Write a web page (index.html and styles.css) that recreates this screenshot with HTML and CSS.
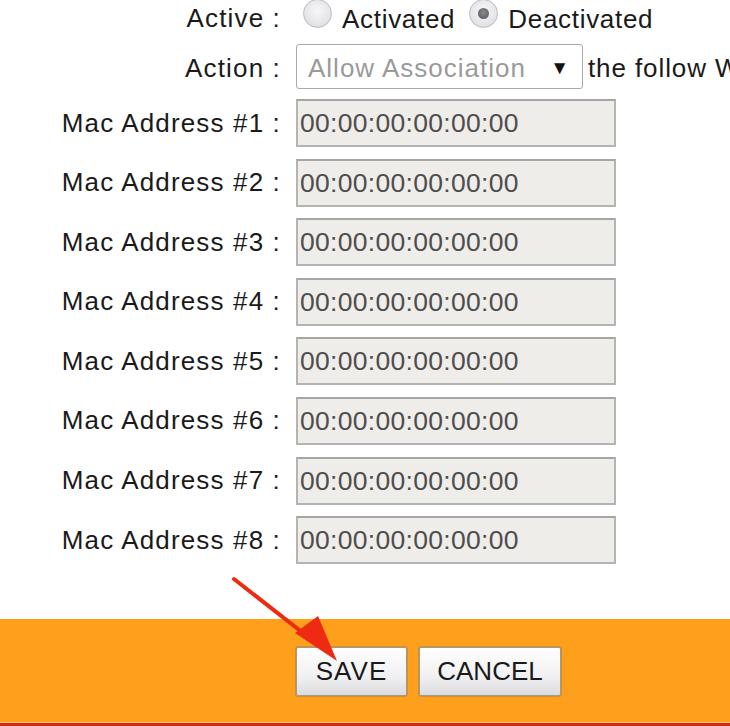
FILE: index.html
```html
<!DOCTYPE html>
<html>
<head>
<meta charset="utf-8">
<link rel="stylesheet" href="styles.css">
</head>
<body>
<div class="page">
  <div class="form">
    <div class="row row-active">
      <div class="label">Active :</div>
      <div class="field radios">
        <span class="radio"></span><span class="rtext">Activated</span>
        <span class="radio checked"></span><span class="rtext">Deactivated</span>
      </div>
    </div>
    <div class="row row-action">
      <div class="label">Action :</div>
      <div class="field">
        <div class="select"><span class="seltext">Allow Association</span><span class="caret">&#9660;</span></div>
        <span class="after">the follow Wireless LAN station(s)</span>
      </div>
    </div>
    <div class="row mac"><div class="label">Mac Address #1 :</div><div class="field"><div class="input">00:00:00:00:00:00</div></div></div>
    <div class="row mac"><div class="label">Mac Address #2 :</div><div class="field"><div class="input">00:00:00:00:00:00</div></div></div>
    <div class="row mac"><div class="label">Mac Address #3 :</div><div class="field"><div class="input">00:00:00:00:00:00</div></div></div>
    <div class="row mac"><div class="label">Mac Address #4 :</div><div class="field"><div class="input">00:00:00:00:00:00</div></div></div>
    <div class="row mac"><div class="label">Mac Address #5 :</div><div class="field"><div class="input">00:00:00:00:00:00</div></div></div>
    <div class="row mac"><div class="label">Mac Address #6 :</div><div class="field"><div class="input">00:00:00:00:00:00</div></div></div>
    <div class="row mac"><div class="label">Mac Address #7 :</div><div class="field"><div class="input">00:00:00:00:00:00</div></div></div>
    <div class="row mac"><div class="label">Mac Address #8 :</div><div class="field"><div class="input">00:00:00:00:00:00</div></div></div>
  </div>
  <div class="footer">
    <div class="spacer"></div>
    <div class="buttons">
      <button class="btn btn-save">SAVE</button>
      <button class="btn btn-cancel">CANCEL</button>
    </div>
  </div>
  <div class="redline"></div>
  <svg class="arrow" width="730" height="726" viewBox="0 0 730 726">
    <line x1="234" y1="579" x2="312" y2="640" stroke="#EE2A12" stroke-width="4" stroke-linecap="round"/>
    <polygon points="337,661 295,633 318,616" fill="#EE2A12"/>
  </svg>
</div>
</body>
</html>
```
FILE: styles.css
```css
html, body {
  margin: 0;
  padding: 0;
  background: #ffffff;
}
body {
  font-family: "Liberation Sans", Arial, sans-serif;
  color: #1a1a1a;
  width: 730px;
  height: 726px;
  overflow: hidden;
}
.page {
  position: relative;
  width: 730px;
  height: 726px;
  overflow: hidden;
  display: flex;
  flex-direction: column;
}
.form {
  display: flex;
  flex-direction: column;
}
.row {
  display: grid;
  grid-template-columns: 280px 1fr;
  column-gap: 16px;
  align-items: center;
}
.label {
  text-align: right;
  font-size: 26px;
  white-space: nowrap;
  letter-spacing: 1.15px;
  margin-right: -1px;
}
.field {
  display: flex;
  align-items: center;
  white-space: nowrap;
}
.row-active {
  height: 32px;
}
.row-active .label {
  padding-top: 1px;
}
.radios {
  padding-left: 7px;
  align-items: flex-start;
}
.radio {
  width: 29px;
  height: 29px;
  border-radius: 50%;
  border: 1px solid #bcbcc0;
  background: radial-gradient(circle at 50% 40%, #f7f7f9 0%, #e4e4e8 65%, #cfcfd3 100%);
  box-sizing: border-box;
  margin-top: -1px;
  position: relative;
  flex: none;
}
.radio.checked::after {
  content: "";
  position: absolute;
  left: 8px;
  top: 8px;
  width: 11px;
  height: 11px;
  border-radius: 50%;
  background: radial-gradient(circle at 50% 40%, #8a8a8e, #555559);
}
.rtext {
  font-size: 26px;
  letter-spacing: 0.7px;
  margin-left: 10px;
  margin-right: 14px;
  margin-top: 4px;
}
.row-action {
  margin-top: 12px;
  height: 45px;
}
.row-action .label {
  padding-top: 3px;
}
.select {
  width: 287px;
  height: 45px;
  box-sizing: border-box;
  border: 1px solid #a9a9a9;
  border-radius: 3px;
  background: #ffffff;
  display: flex;
  align-items: center;
  justify-content: space-between;
  padding: 3px 13px 0 11px;
  flex: none;
}
.seltext {
  color: #9a9a9a;
  font-size: 26px;
  letter-spacing: 1px;
}
.caret {
  font-size: 19px;
  color: #111;
}
.after {
  font-size: 26px;
  letter-spacing: 0.9px;
  margin-left: 5px;
  padding-top: 3px;
}
.mac {
  height: 48px;
  margin-top: 11.6px;
}
.row-action + .mac {
  margin-top: 10px;
}
.input {
  width: 320px;
  height: 48px;
  box-sizing: border-box;
  border: 2px solid #b4b4b2;
  border-top-color: #a6a6a4;
  background: #efede9;
  color: #4e4e4e;
  font-size: 26.5px;
  line-height: 44px;
  padding-left: 2px;
  letter-spacing: 0.3px;
}
.footer {
  margin-top: 55px;
  height: 103px;
  background: #ffa01c;
  display: grid;
  grid-template-columns: 280px 1fr;
  column-gap: 16px;
  box-sizing: border-box;
  padding-top: 28px;
}
.buttons {
  display: flex;
  gap: 12px;
  align-items: flex-start;
}
.btn {
  height: 49px;
  border: 1px solid #9c9c9c;
  border-radius: 2px;
  background: linear-gradient(#ffffff, #f1f1f3 60%, #dcdce0);
  font-family: "Liberation Sans", Arial, sans-serif;
  font-size: 26px;
  color: #1a1a1a;
  padding: 0;
  box-shadow: 0 0 0 1px rgba(150, 110, 40, 0.35);
}
.btn-save {
  width: 111px;
  letter-spacing: 1px;
}
.btn-cancel {
  width: 142px;
}
.redline {
  height: 4px;
  border-top: 1px solid #f6c58a;
  background: #d42a10;
  box-sizing: border-box;
}
.arrow {
  position: absolute;
  left: 0;
  top: 0;
  pointer-events: none;
}
```
